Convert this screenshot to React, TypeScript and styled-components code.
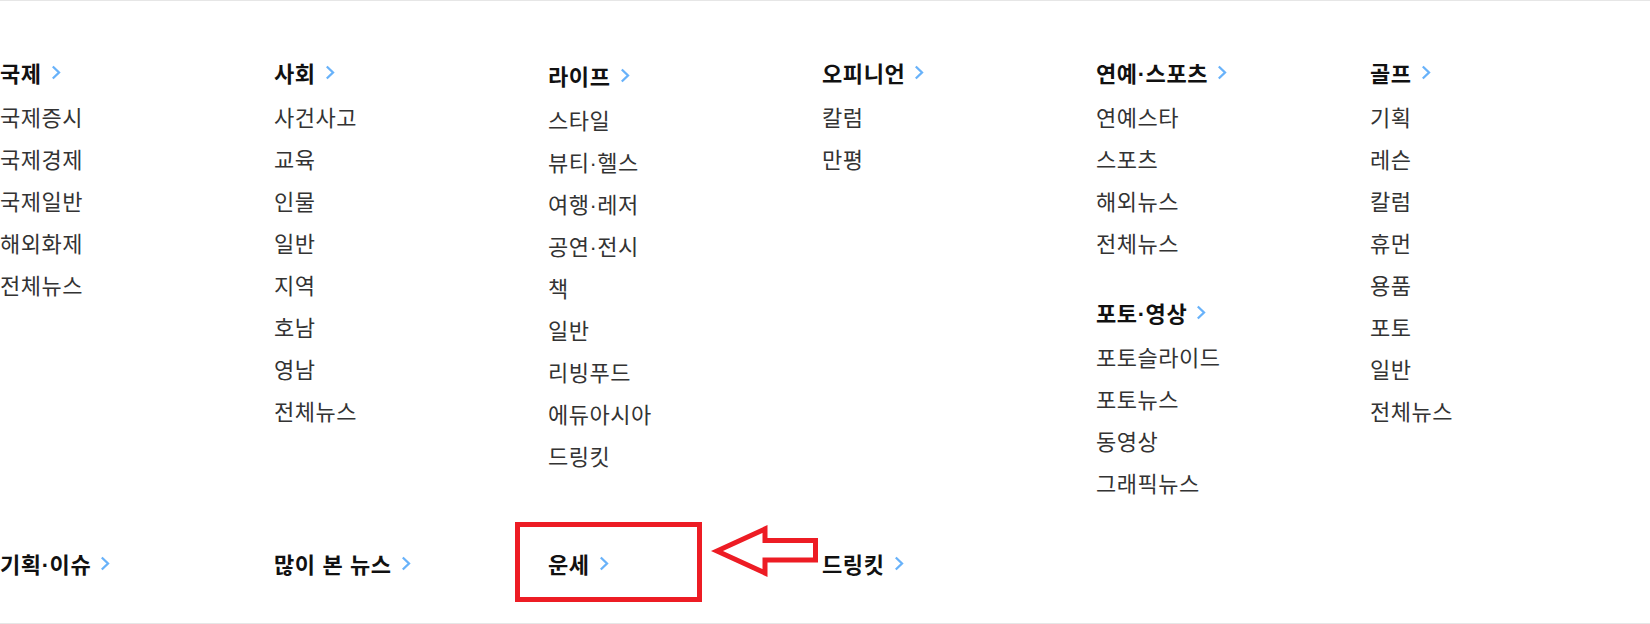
import React from "react";
import styled, { createGlobalStyle } from "styled-components";

interface Section {
  title: string;
  items: string[];
}

interface Column {
  shift?: number;
  sections: Section[];
}

const columns: Column[] = [
  { sections: [{ title: "국제", items: ["국제증시", "국제경제", "국제일반", "해외화제", "전체뉴스"] }] },
  {
    sections: [
      { title: "사회", items: ["사건사고", "교육", "인물", "일반", "지역", "호남", "영남", "전체뉴스"] },
    ],
  },
  {
    shift: 3,
    sections: [
      {
        title: "라이프",
        items: ["스타일", "뷰티·헬스", "여행·레저", "공연·전시", "책", "일반", "리빙푸드", "에듀아시아", "드링킷"],
      },
    ],
  },
  { sections: [{ title: "오피니언", items: ["칼럼", "만평"] }] },
  {
    sections: [
      { title: "연예·스포츠", items: ["연예스타", "스포츠", "해외뉴스", "전체뉴스"] },
      { title: "포토·영상", items: ["포토슬라이드", "포토뉴스", "동영상", "그래픽뉴스"] },
    ],
  },
  {
    sections: [{ title: "골프", items: ["기획", "레슨", "칼럼", "휴먼", "용품", "포토", "일반", "전체뉴스"] }],
  },
];

const bottomLinks = ["기획·이슈", "많이 본 뉴스", "운세", "드링킷"];

const Chevron = () => (
  <ChevronSvg viewBox="0 0 10 15" width="10" height="15">
    <polyline points="1.8,1.5 8,7.5 1.8,13.5" fill="none" stroke="#68b2fa" strokeWidth="2.3" />
  </ChevronSvg>
);

export default function App() {
  return (
    <>
      <GlobalStyle />
      <Page>
        <MenuGrid>
          {columns.map((col, i) => (
            <MenuColumn key={i} $shift={col.shift ?? 0}>
              {col.sections.map((sec) => (
                <MenuSection key={sec.title}>
                  <Heading>
                    {sec.title}
                    <Chevron />
                  </Heading>
                  <ItemList>
                    {sec.items.map((item) => (
                      <Item key={item}>{item}</Item>
                    ))}
                  </ItemList>
                </MenuSection>
              ))}
            </MenuColumn>
          ))}
        </MenuGrid>
        <BottomRow>
          {bottomLinks.map((link) => (
            <Heading key={link}>
              {link}
              <Chevron />
            </Heading>
          ))}
        </BottomRow>

        {/* red callout drawn over the screenshot */}
        <CalloutBox />
        <CalloutArrow viewBox="0 0 120 60" width="120" height="60">
          <path
            d="M12,29 L60,7 L60,18.5 L110.5,18.5 L110.5,38 L60,38 L60,51 Z"
            fill="none"
            stroke="#ed1c24"
            strokeWidth="5"
            strokeLinejoin="miter"
          />
        </CalloutArrow>
      </Page>
    </>
  );
}

const GlobalStyle = createGlobalStyle`
  html, body {
    margin: 0;
    padding: 0;
    background: #fff;
  }
  body {
    /* Latin first so the middle dot stays narrow, hangul falls through to Noto */
    font-family: "Liberation Sans", "Noto Sans CJK KR", sans-serif;
  }
`;

const Page = styled.div`
  position: relative;
  box-sizing: border-box;
  width: 1650px;
  height: 624px;
  border-top: 1px solid #e6e6e6;
  border-bottom: 1px solid #e6e6e6;
  overflow: hidden;
`;

const MenuGrid = styled.div`
  display: grid;
  grid-template-columns: repeat(6, 274px);
  align-items: start;
  padding-top: 57px;
`;

const MenuColumn = styled.div<{ $shift: number }>`
  display: flex;
  flex-direction: column;
  gap: 32px;
  margin-top: ${(p) => p.$shift}px;
`;

const MenuSection = styled.div`
  display: flex;
  flex-direction: column;
`;

const Heading = styled.div`
  display: flex;
  align-items: center;
  height: 28px;
  font-size: 22px;
  font-weight: 700;
  letter-spacing: 0.6px;
  color: #111;
  white-space: nowrap;
`;

const ChevronSvg = styled.svg`
  margin-left: 9px;
  margin-top: 1px;
  flex: none;
`;

const ItemList = styled.ul`
  list-style: none;
  margin: 12px 0 0;
  padding: 0;
`;

const Item = styled.li`
  height: 42px;
  line-height: 42px;
  font-size: 22px;
  letter-spacing: 0.5px;
  color: #333;
  white-space: nowrap;
`;

const BottomRow = styled.div`
  display: grid;
  grid-template-columns: repeat(6, 274px);
  margin-top: 43px;
`;

const CalloutBox = styled.div`
  position: absolute;
  left: 515px;
  top: 521px;
  width: 187px;
  height: 80px;
  box-sizing: border-box;
  border: 5px solid #ed1c24;
`;

const CalloutArrow = styled.svg`
  position: absolute;
  left: 705px;
  top: 521px;
`;
